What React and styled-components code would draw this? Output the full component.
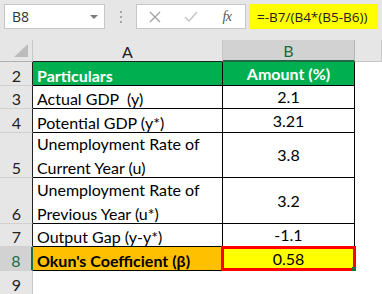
import React from 'react';
import styled, { createGlobalStyle, css } from 'styled-components';

const GlobalStyle = createGlobalStyle`
  html, body { margin: 0; padding: 0; background: #fff; }
  body { font-family: Lato, "Liberation Sans", sans-serif; }
  * { box-sizing: border-box; }
`;

const Page = styled.div`
  width: 382px;
  height: 294px;
  overflow: hidden;
  background: #fff;
`;

const TopBar = styled.div`
  height: 40px;
  background: #e6e6e6;
  display: flex;
  align-items: flex-start;
  padding: 4px 0 0 4px;
`;

const NameBox = styled.div`
  width: 101px;
  height: 25px;
  background: #fff;
  border: 1px solid #c6c6c6;
  display: flex;
  align-items: center;
  justify-content: space-between;
  padding: 0 6px 0 7px;
  font-family: "Open Sans", sans-serif;
  font-size: 14px;
  color: #333;
`;

const Caret = styled.span`
  width: 0;
  height: 0;
  border-left: 4px solid transparent;
  border-right: 4px solid transparent;
  border-top: 4px solid #7a7a7a;
`;

const Grip = styled.div`
  width: 31px;
  height: 25px;
  display: flex;
  flex-direction: column;
  align-items: center;
  justify-content: center;
  gap: 3px;
`;

const GripDot = styled.span`
  width: 2px;
  height: 2px;
  background: #a6a6a6;
`;

const FxBox = styled.div`
  width: 110px;
  height: 25px;
  background: #fff;
  border: 1px solid #c6c6c6;
  display: flex;
  align-items: center;
`;

const IconSlot = styled.div`
  width: 36px;
  height: 23px;
  display: flex;
  align-items: center;
  justify-content: center;
`;

const FxLabel = styled.span`
  font-family: "Liberation Serif", serif;
  font-style: italic;
  font-size: 14px;
  color: #555;
  letter-spacing: -0.5px;
`;

const FormulaBox = styled.div`
  margin-left: 3px;
  width: 129px;
  height: 25px;
  background: #ffff00;
  display: flex;
  align-items: center;
  padding-left: 8px;
  font-family: "Open Sans", sans-serif;
  font-size: 13.5px;
  color: #222;
`;

const Sheet = styled.div`
  display: grid;
  grid-template-columns: 33px 190px 132px 27px;
  grid-template-rows: 22px 24px 23px 24px 45px 46px 23px 24px 24px;
`;

const Corner = styled.div`
  background: #e6e6e6;
  border-right: 1px solid #c6c6c6;
  border-bottom: 1px solid #b0b0b0;
  position: relative;
`;

const CornerMark = styled.span`
  position: absolute;
  right: 4px;
  bottom: 4px;
  width: 0;
  height: 0;
  border-left: 14px solid transparent;
  border-bottom: 13px solid #bcbcbc;
`;

const ColHead = styled.div`
  background: ${p => (p.$active ? '#d2d2d2' : '#e6e6e6')};
  border-right: 1px solid ${p => (p.$active ? '#b8b8b8' : '#c6c6c6')};
  border-bottom: ${p =>
    p.$active ? '2px solid #1e6b43' : p.$table ? '1px solid #222' : '1px solid #c6c6c6'};
  display: flex;
  align-items: center;
  justify-content: center;
  font-size: 16px;
  color: ${p => (p.$active ? '#1d6b46' : '#222')};
  padding-top: 1px;
`;

const RowHead = styled.div`
  background: ${p => (p.$active ? '#d2d2d2' : '#e6e6e6')};
  border-right: ${p =>
    p.$active ? '2px solid #1e6b43' : p.$table ? '1px solid #222' : '1px solid #c6c6c6'};
  border-bottom: 1px solid #d0d0d0;
  display: flex;
  align-items: flex-end;
  justify-content: center;
  font-size: 16px;
  line-height: 24px;
  color: ${p => (p.$active ? '#1d6b46' : '#222')};
  padding-left: 1px;
  & > span { margin-bottom: -3px; }
`;

const Cell = styled.div`
  position: relative;
  background: ${p => p.$bg || '#fff'};
  border-right: 1px solid #000;
  border-bottom: 1px solid #000;
  display: flex;
  align-items: ${p => (p.$center ? 'center' : 'flex-end')};
  justify-content: ${p => (p.$center ? 'center' : 'flex-start')};
  padding: ${p => (p.$center ? '0' : '0 0 0 4px')};
  font-size: 16px;
  line-height: 24px;
  font-weight: ${p => (p.$bold ? 700 : 400)};
  color: ${p => p.$color || '#000'};
  & > span { margin-bottom: ${p => (p.$center ? '0' : '-3px')}; }
  ${p =>
    p.$selected &&
    css`
      &::after {
        content: '';
        position: absolute;
        left: -2px;
        right: -2px;
        top: -1px;
        bottom: -1px;
        border: 3px solid #ff0000;
        pointer-events: none;
      }
    `}
`;

const FillHandle = styled.span`
  position: absolute;
  right: -2px;
  bottom: -1px;
  width: 4px;
  height: 4px;
  background: #1e7145;
  z-index: 2;
`;

const Blank = styled.div`
  background: #fff;
`;

const rows = [
  { n: 2, a: 'Particulars', b: 'Amount (%)', head: true },
  { n: 3, a: 'Actual GDP  (y)', b: '2.1' },
  { n: 4, a: 'Potential GDP (y*)', b: '3.21' },
  { n: 5, a: ['Unemployment Rate of', 'Current Year (u)'], b: '3.8' },
  { n: 6, a: ['Unemployment Rate of', 'Previous Year (u*)'], b: '3.2' },
  { n: 7, a: 'Output Gap (y-y*)', b: '-1.1' },
  { n: 8, a: "Okun's Coefficient (β)", b: '0.58', result: true },
];

const Lines = ({ text }) =>
  Array.isArray(text) ? (
    <span>
      {text.map((t, i) => (
        <React.Fragment key={i}>
          {t}
          {i < text.length - 1 && <br />}
        </React.Fragment>
      ))}
    </span>
  ) : (
    <span style={{ whiteSpace: 'pre' }}>{text}</span>
  );

export default function App() {
  return (
    <Page>
      <GlobalStyle />
      <TopBar>
        <NameBox>
          <span>B8</span>
          <Caret />
        </NameBox>
        <Grip>
          <GripDot />
          <GripDot />
          <GripDot />
        </Grip>
        <FxBox>
          <IconSlot>
            <svg width="12" height="12" viewBox="0 0 12 12">
              <path d="M1 1 L11 11 M11 1 L1 11" stroke="#a0a0a0" strokeWidth="1.3" fill="none" />
            </svg>
          </IconSlot>
          <IconSlot>
            <svg width="14" height="12" viewBox="0 0 14 12">
              <path d="M1 6 L5 10 L13 1" stroke="#c8c8c8" strokeWidth="1.6" fill="none" />
            </svg>
          </IconSlot>
          <IconSlot>
            <FxLabel>fx</FxLabel>
          </IconSlot>
        </FxBox>
        <FormulaBox>=-B7/(B4*(B5-B6))</FormulaBox>
      </TopBar>
      <Sheet>
        <Corner>
          <CornerMark />
        </Corner>
        <ColHead $table>A</ColHead>
        <ColHead $active>B</ColHead>
        <ColHead />
        {rows.map(r => (
          <React.Fragment key={r.n}>
            <RowHead $table={!r.result} $active={r.result}>
              <span>{r.n}</span>
            </RowHead>
            <Cell
              $bg={r.head ? '#00b050' : r.result ? '#ffc000' : '#fff'}
              $bold={r.head || r.result}
              $color={r.head ? '#fff' : '#000'}
            >
              <Lines text={r.a} />
            </Cell>
            <Cell
              $center
              $bg={r.head ? '#00b050' : r.result ? '#ffff00' : '#fff'}
              $bold={r.head}
              $color={r.head ? '#fff' : '#000'}
              $selected={r.result}
            >
              <span>{r.b}</span>
              {r.result && <FillHandle />}
            </Cell>
            <Blank />
          </React.Fragment>
        ))}
        <RowHead>
          <span>9</span>
        </RowHead>
        <Blank />
        <Blank />
        <Blank />
      </Sheet>
    </Page>
  );
}
